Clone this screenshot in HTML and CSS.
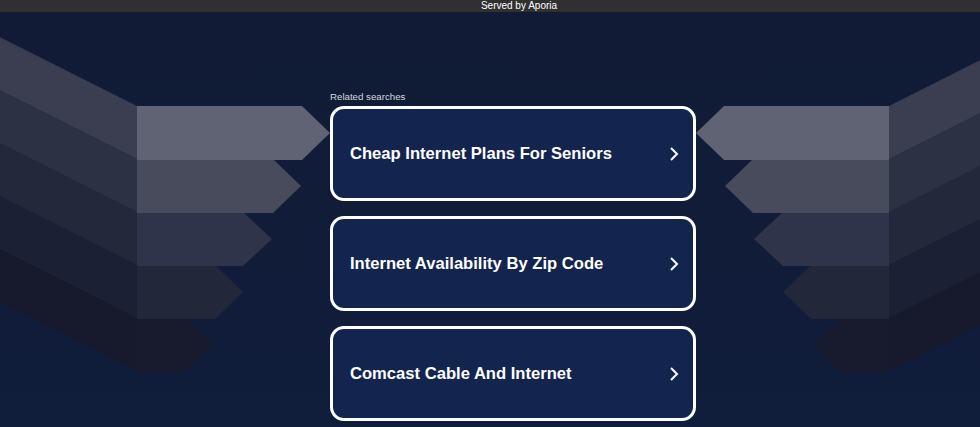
FILE: index.html
```html
<!DOCTYPE html>
<html lang="en">

<head>
  <meta charset="UTF-8">
  <meta name="viewport" content="width=device-width, initial-scale=1.0">
  <title>Related searches</title>
  <link rel="stylesheet" href="styles.css">
</head>

<body>
  <div class="topbar">Served by Aporia</div>

  <!-- decorative arrows behind the list -->
  <svg class="backdrop" width="980" height="427" viewBox="0 0 980 427" aria-hidden="true">
    <g id="wing">
      <polygon fill="#161a2c" points="-100,199 137,318 137,371 -100,252" />
      <polygon fill="#1c2034" points="-100,146 137,265 137,318 -100,199" />
      <polygon fill="#24283b" points="-100,93 137,212 137,265 -100,146" />
      <polygon fill="#2d3144" points="-100,40 137,159 137,212 -100,93" />
      <polygon fill="#3a3e50" points="-100,-13 137,106 137,159 -100,40" />
      <polygon fill="#171b2d" points="137,318 185,318 213,345 185,372 137,372" />
      <polygon fill="#22273a" points="137,265 215,265 243,292 215,319 137,319" />
      <polygon fill="#30344a" points="137,212 243,212 272,239 243,266 137,266" />
      <polygon fill="#474b5b" points="137,159 273,159 301,186 273,213 137,213" />
      <polygon fill="#5f6374" points="137,106 302,106 330,133 302,160 137,160" />
    </g>
    <use href="#wing" transform="translate(1026,0) scale(-1,1)" />
  </svg>

  <main class="content">
    <section class="list">
      <p class="label">Related searches</p>
      <a class="card" href="#">
        <span>Cheap Internet Plans For Seniors</span>
        <svg class="chev" width="10" height="16" viewBox="0 0 10 16"><polyline points="2,2 8,8 2,14" /></svg>
      </a>
      <a class="card" href="#">
        <span>Internet Availability By Zip Code</span>
        <svg class="chev" width="10" height="16" viewBox="0 0 10 16"><polyline points="2,2 8,8 2,14" /></svg>
      </a>
      <a class="card" href="#">
        <span>Comcast Cable And Internet</span>
        <svg class="chev" width="10" height="16" viewBox="0 0 10 16"><polyline points="2,2 8,8 2,14" /></svg>
      </a>
    </section>
  </main>
</body>

</html>
```

FILE: styles.css
```css
html,
body {
  margin: 0;
  height: 427px;
  overflow: hidden;
}

body {
  position: relative;
  background: linear-gradient(180deg, #111b35 0%, #101d3b 100%);
  font-family: "Liberation Sans", Arial, sans-serif;
}

.topbar {
  position: relative;
  z-index: 2;
  height: 12px;
  line-height: 12px;
  background-color: #303030;
  color: white;
  font-size: 10px;
  text-align: center;
  padding-left: 58px;
}

.backdrop {
  position: absolute;
  top: 0;
  left: 0;
  z-index: 0;
}

.content {
  position: relative;
  z-index: 1;
  display: flex;
  justify-content: center;
  padding-left: 46px;
  padding-top: 79px;
}

.list {
  width: 366px;
  display: flex;
  flex-direction: column;
  gap: 15px;
}

.label {
  margin: 0 0 -12px 0;
  color: #d3d6de;
  font-size: 9.7px;
  line-height: 12px;
}

.card {
  box-sizing: border-box;
  height: 95px;
  display: flex;
  align-items: center;
  justify-content: space-between;
  padding: 0 14px 0 17px;
  border: 3px solid white;
  border-radius: 14px;
  background-color: #13254f;
  color: white;
  text-decoration: none;
  font-weight: bold;
  font-size: 16.6px;
}

.chev polyline {
  fill: none;
  stroke: white;
  stroke-width: 2;
}
```
